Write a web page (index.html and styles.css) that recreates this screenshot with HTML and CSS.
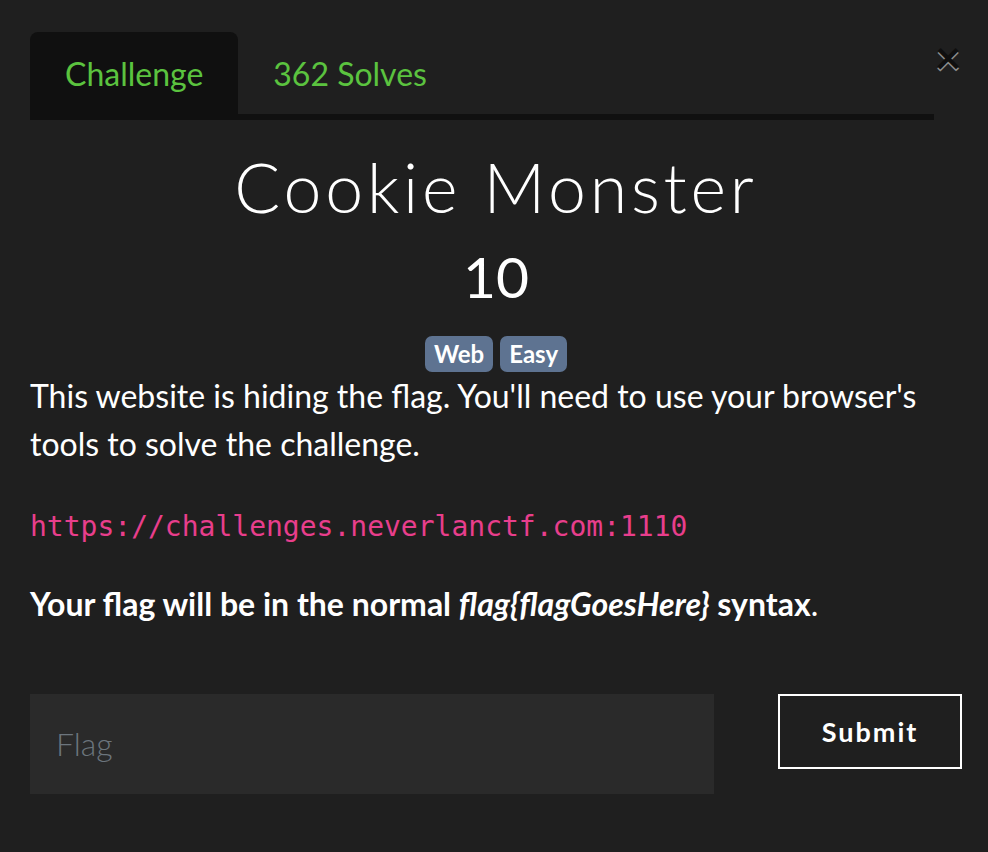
FILE: index.html
```html
<!DOCTYPE html>
<html lang="en">
<head>
    <meta charset="UTF-8">
    <meta name="viewport" content="width=device-width, initial-scale=1.0">
    <title>Cookie Monster</title>
    <link rel="stylesheet" href="styles.css">
</head>
<body>

    <div class="modal">
        <div class="modal-header">
            <ul class="tabs">
                <li class="tab active">Challenge</li>
                <li class="tab">362 Solves</li>
            </ul>
            <button class="close" type="button">&times;</button>
        </div>

        <h1 class="title">Cookie Monster</h1>
        <h2 class="points">10</h2>
        <div class="tags">
            <span class="badge">Web</span>
            <span class="badge">Easy</span>
        </div>

        <div class="description">
            <p>This website is hiding the flag. You'll need to use your browser's tools to solve the challenge.</p>
            <p><code>https://challenges.neverlanctf.com:1110</code></p>
            <p><strong>Your flag will be in the normal <em>flag{flagGoesHere}</em> syntax</strong>.</p>
        </div>

        <form class="submit-row" onsubmit="return false">
            <input type="text" class="flag-input" placeholder="Flag">
            <button type="submit" class="submit-btn">Submit</button>
        </form>
    </div>

</body>
</html>
```

FILE: styles.css
```css
body {
    margin: 0;
    background-color: #1f1f1f;
    color: #fff;
    font-family: Lato, "Open Sans", sans-serif;
    font-size: 32px;
    line-height: 1.5;
}
.modal {
    padding: 32px 26px 0 30px;
}
.modal-header {
    display: flex;
    align-items: flex-start;
}
.tabs {
    flex: 1;
    display: flex;
    list-style: none;
    margin: 0;
    padding: 0;
    border-bottom: 6px solid #101010;
}
.tab {
    padding: 17px 35px 21px;
    margin-bottom: -6px;
    color: #5bc33f;
    font-size: 32px;
    line-height: 50px;
    border-radius: 8px 8px 0 0;
}
.tab.active {
    background-color: #101010;
}
.close {
    width: 28px;
    padding: 0;
    margin-top: 2px;
    border: none;
    background: none;
    color: #000;
    font-family: Lato, sans-serif;
    font-size: 46px;
    font-weight: 700;
    line-height: 1;
    text-shadow: 0 2px 0 #fff;
    opacity: 0.5;
    cursor: pointer;
}
.title {
    margin: 26px 0 0;
    text-align: center;
    font-size: 68px;
    font-weight: 300;
    letter-spacing: 3.8px;
    line-height: 1.2;
}
.points {
    margin: 14px 0 0;
    text-align: center;
    font-size: 57px;
    font-weight: 400;
    line-height: 1.2;
}
.tags {
    display: flex;
    justify-content: center;
    gap: 7px;
    margin-top: 26px;
}
.badge {
    background-color: #5e7391;
    color: #fff;
    font-size: 24px;
    font-weight: 700;
    line-height: 1;
    padding: 6px 9px;
    border-radius: 7px;
}
.description p {
    margin: 0 0 32px;
}
code {
    font-family: "DejaVu Sans Mono", monospace;
    font-size: 28px;
    color: #e83e8c;
}
.submit-row {
    display: flex;
    align-items: flex-start;
    justify-content: space-between;
    margin-top: 66px;
}
.flag-input {
    width: 684px;
    height: 100px;
    box-sizing: border-box;
    padding: 0 26px;
    border: none;
    background-color: #2a2a2a;
    color: #fff;
    font-family: Lato, sans-serif;
    font-size: 32px;
    font-weight: 300;
}
.flag-input::placeholder {
    color: #6c757d;
}
.submit-btn {
    width: 184px;
    height: 75px;
    border: 2px solid #fff;
    background: none;
    color: #fff;
    font-family: Lato, sans-serif;
    font-size: 27px;
    font-weight: 700;
    letter-spacing: 2px;
    cursor: pointer;
}
```
